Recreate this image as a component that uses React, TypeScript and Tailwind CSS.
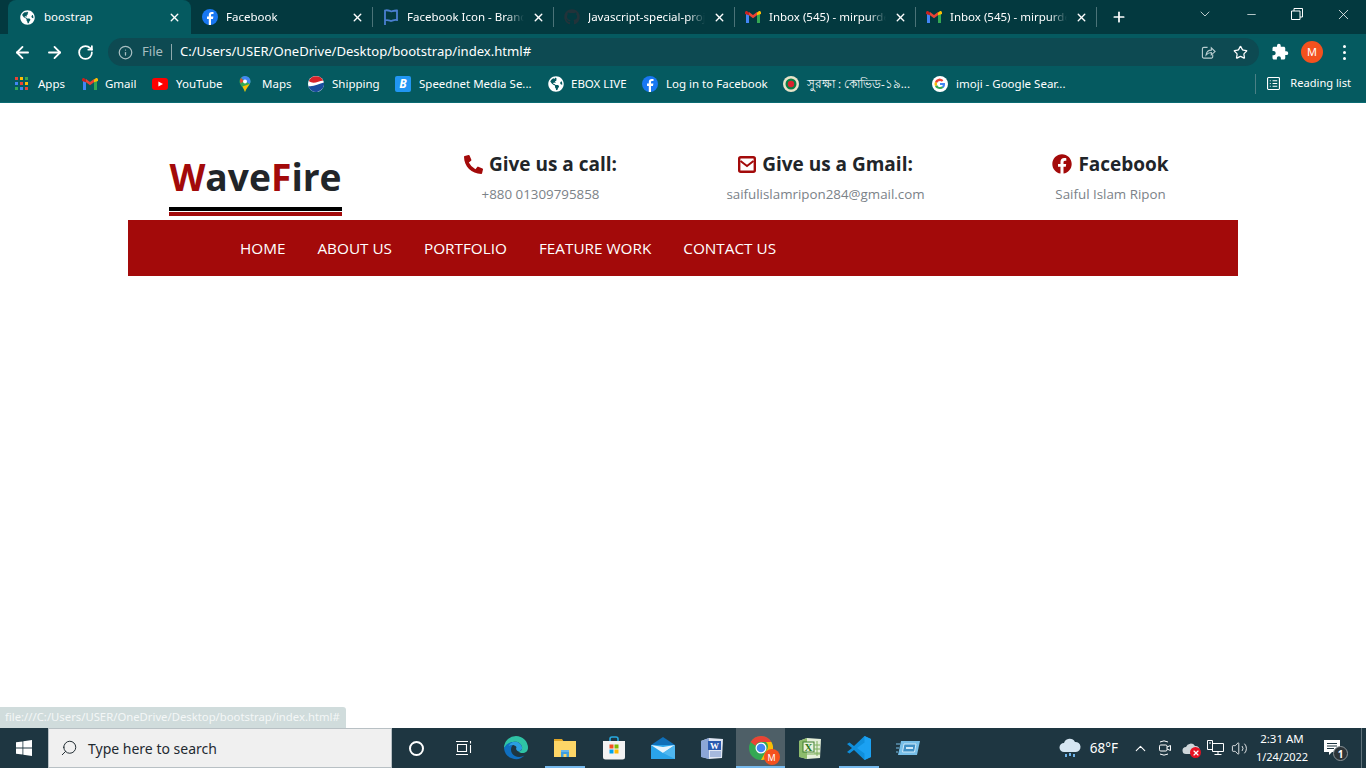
import { ArrowLeft, ArrowRight, RotateCw, Info, Star, Plus, X, Minus, ChevronDown, ChevronUp, Search, Volume2 } from "lucide-react";
import { FaPhoneAlt, FaFacebook, FaGithub, FaGlobeAmericas } from "react-icons/fa";
import { MdExtension } from "react-icons/md";

const uiFont = "font-['Noto_Sans',sans-serif]";

function FbIcon() {
  return (
    <svg viewBox="0 0 16 16" className="h-4 w-4 shrink-0">
      <circle cx="8" cy="8" r="8" fill="#1877f2" />
      <path d="M9 16V10h2l.4-2.4H9V6.3c0-.7.3-1.2 1.3-1.2h1.2V3c-.4 0-1-.1-1.7-.1-1.9 0-3 1.100-3 3v1.700H5V10h1.800v6z" fill="#fff" />
    </svg>
  );
}

function GmailIcon() {
  return (
    <svg viewBox="0 0 16 12" className="h-3 w-4 shrink-0">
      <path d="M1 12V2l3 2.300V12z" fill="#4285f4" />
      <path d="M12 12V4.300L15 2v10z" fill="#34a853" />
      <path d="M4 4.300V1l4 3 4-3v3.300L8 7.300z" fill="#ea4335" />
      <path d="M0 3V1.600C0 .3 1.500-.4 2.500.4L4 1.500v2.800z" fill="#c5221f" />
      <path d="M16 3V1.600C16 .3 14.500-.4 13.500.4L12 1.500v2.800z" fill="#fbbc04" />
    </svg>
  );
}

function GoogleIcon() {
  return (
    <svg viewBox="0 0 16 16" className="h-4 w-4 shrink-0">
      <circle cx="8" cy="8" r="8" fill="#fff" />
      <path d="M13 8.200c0-.4 0-.8-.1-1.100H8v2h2.800a2.500 2.500 0 0 1-1 1.600l1.600 1.300c1-.9 1.600-2.200 1.600-3.800z" fill="#4285f4" />
      <path d="M8 13c1.400 0 2.500-.4 3.400-1.200l-1.600-1.300c-.5.3-1 .5-1.800.5-1.300 0-2.500-.9-2.900-2.100L3 10.200C3.800 11.900 5.800 13 8 13z" fill="#34a853" />
      <path d="M5.100 8.900a3 3 0 0 1 0-1.800L3 5.800a5 5 0 0 0 0 4.400z" fill="#fbbc05" />
      <path d="M8 5c.8 0 1.400.3 1.900.8l1.500-1.500A5 5 0 0 0 3 5.800l2.100 1.300C5.500 5.900 6.700 5 8 5z" fill="#ea4335" />
    </svg>
  );
}

function AppsIcon() {
  const colors = ["#ea4335", "#fbbc05", "#34a853", "#4285f4", "#ea4335", "#fbbc05", "#34a853", "#4285f4", "#ea4335"];
  return (
    <div className="grid h-[13px] w-[13px] shrink-0 grid-cols-3 gap-[2px]">
      {colors.map((c, i) => (
        <span key={i} className="block" style={{ background: c }} />
      ))}
    </div>
  );
}

function YoutubeIcon() {
  return (
    <svg viewBox="0 0 16 12" className="h-3 w-4 shrink-0">
      <rect width="16" height="12" rx="3" fill="#f00" />
      <path d="M6.400 3.400v5.200L11 6z" fill="#fff" />
    </svg>
  );
}

function MapsIcon() {
  return (
    <svg viewBox="0 0 12 16" className="h-4 w-3 shrink-0">
      <path d="M6 0a5.500 5.500 0 0 1 5.500 5.500c0 3.500-4 6-5.500 10.500C4.500 11.500.5 9 .5 5.500A5.500 5.500 0 0 1 6 0z" fill="#34a853" />
      <path d="M6 0a5.500 5.500 0 0 1 5.500 5.500c0 1-.3 1.800-.8 2.600L2 2a5.400 5.400 0 0 1 4-2z" fill="#4285f4" />
      <path d="M2 2 .9 4.500l.8 3 3-2.500z" fill="#ea4335" />
      <path d="M3.500 10.500 10.700 8c-1.500 2.500-3.800 4.500-4.700 8-.5-2-1.500-3.800-2.500-5.500z" fill="#fbbc05" />
      <circle cx="6" cy="5.500" r="2" fill="#fff" />
    </svg>
  );
}

function PepsiIcon() {
  return (
    <svg viewBox="0 0 16 16" className="h-4 w-4 shrink-0">
      <circle cx="8" cy="8" r="8" fill="#fff" />
      <path d="M.8 5a8 8 0 0 1 14.400-.5C10 5.500 5 8.500.8 5z" fill="#d8232a" />
      <path d="M.3 10C5 11 11 8 15.900 6.500A8 8 0 0 1 .3 10z" fill="#1a4d9e" />
    </svg>
  );
}

function SpeednetIcon() {
  return (
    <span className="flex h-4 w-4 shrink-0 items-center justify-center rounded-[2px] bg-[#2196f3] text-[12px] font-bold italic leading-none text-white">
      B
    </span>
  );
}

function ShieldIcon() {
  return (
    <svg viewBox="0 0 16 16" className="h-4 w-4 shrink-0">
      <circle cx="8" cy="8" r="8" fill="#e8e3c8" />
      <circle cx="8" cy="8" r="5.500" fill="#0a7d45" />
      <circle cx="8" cy="8" r="3.200" fill="#d9232e" />
    </svg>
  );
}

function EnvelopeIcon() {
  return (
    <svg viewBox="0 0 18 17" className="h-[17px] w-[18px]" fill="none" stroke="#a30a0a">
      <rect x="1.200" y="1.200" width="15.600" height="14.600" rx="1.500" strokeWidth="2.400" />
      <path d="M2.500 5 9 10l6.500-5" strokeWidth="2" />
    </svg>
  );
}

const tabs = [
  { title: "Facebook", icon: <FbIcon /> },
  {
    title: "Facebook Icon - Brand",
    icon: (
      <svg viewBox="0 0 16 16" className="h-4 w-4 shrink-0" fill="none" stroke="#4a7fd0" strokeWidth="1.800">
        <path d="M2 16V1.500c3-1 5 .8 6 .8s3-1 6-.8v9.500c-3-.5-5 1-6 1s-3-1.500-6-.5" />
      </svg>
    ),
  },
  { title: "Javascript-special-proj", icon: <FaGithub className="h-4 w-4 shrink-0 text-[#22333a]" /> },
  { title: "Inbox (545) - mirpurde", icon: <GmailIcon /> },
  { title: "Inbox (545) - mirpurde", icon: <GmailIcon /> },
];

const bookmarks = [
  { label: "Apps", icon: <AppsIcon />, w: "w-[67px]", text: "pl-[10px]" },
  { label: "Gmail", icon: <GmailIcon />, w: "w-[70px]", text: "pl-[7px]" },
  { label: "YouTube", icon: <YoutubeIcon />, w: "w-[87px]", text: "pl-[8px]" },
  { label: "Maps", icon: <MapsIcon />, w: "w-[69px]", text: "pl-[11px]" },
  { label: "Shipping", icon: <PepsiIcon />, w: "w-[87px]", text: "pl-[8px]" },
  { label: "Speednet Media Se...", icon: <SpeednetIcon />, w: "w-[153px]", text: "pl-[8px]" },
  { label: "EBOX LIVE", icon: <FaGlobeAmericas className="h-4 w-4 shrink-0 text-white" />, w: "w-[94px]", text: "pl-[7px]" },
  { label: "Log in to Facebook", icon: <FbIcon />, w: "w-[141px]", text: "pl-[8px]" },
  { label: "সুরক্ষা : কোভিড-১৯...", icon: <ShieldIcon />, w: "w-[149px]", text: "pl-[8px]" },
  { label: "imoji - Google Sear...", icon: <GoogleIcon />, w: "w-[140px]", text: "pl-[8px]" },
];

const contacts = [
  { icon: <FaPhoneAlt className="h-[19px] w-[19px] text-[#a30a0a]" />, title: "Give us a call:", sub: "+880 01309795858" },
  { icon: <EnvelopeIcon />, title: "Give us a Gmail:", sub: "saifulislamripon284@gmail.com" },
  { icon: <FaFacebook className="h-[20px] w-[20px] text-[#a30a0a]" />, title: "Facebook", sub: "Saiful Islam Ripon" },
];

const navItems = ["Home", "About us", "Portfolio", "Feature work", "Contact us"];

function EdgeIcon() {
  return (
    <svg viewBox="0 0 24 24" className="h-6 w-6">
      <path d="M12 0a12 12 0 0 1 12 12c0 3-2.500 5-5.500 5-2 0-3.500-.6-4-1.500 3-.5 4-2.500 3.500-4.500C17 7 13 5 9 6c-4 1-7 4-9 6A12 12 0 0 1 12 0z" fill="#2fc3a5" />
      <path d="M0 12c2-3.500 5.500-6 9-6 4-.5 2 1-1 4-2 3-1 8 3 10 3 1.500 7 1 9.500-.5A12 12 0 0 1 0 12z" fill="#0f6fc0" />
      <path d="M9 6c4-1 8 1 9 5 .5 2-.5 4-3.500 4.500-2-1-3-2.500-2-4.500-2.500-3-6-2-8-1 1-1.800 2.500-3.300 4.500-4z" fill="#2a9fe0" />
    </svg>
  );
}

function FolderIcon() {
  return (
    <svg viewBox="0 0 24 20" className="h-5 w-6">
      <path d="M1 1h8l2 3H1z" fill="#e0a526" />
      <rect x="1" y="3" width="22" height="16" fill="#fdd667" />
      <path d="M8 19v-6h8v6h-2.500v-3h-3v3z" fill="#3f9fe0" />
      <rect x="8" y="12" width="8" height="2" fill="#68b6ea" />
    </svg>
  );
}

function StoreIcon() {
  return (
    <svg viewBox="0 0 24 24" className="h-6 w-6">
      <path d="M8 6V3a2 2 0 0 1 2-2h4a2 2 0 0 1 2 2v3" fill="none" stroke="#27a9e0" strokeWidth="1.600" />
      <path d="M1 5h22v16a2.500 2.500 0 0 1-2.500 2.500h-17A2.500 2.500 0 0 1 1 21z" fill="#f2f2f2" />
      <rect x="7.500" y="8.500" width="4" height="4" fill="#f25022" />
      <rect x="12.500" y="8.500" width="4" height="4" fill="#7fba00" />
      <rect x="7.500" y="13.500" width="4" height="4" fill="#00a4ef" />
      <rect x="12.500" y="13.500" width="4" height="4" fill="#ffb900" />
    </svg>
  );
}

function MailIcon() {
  return (
    <svg viewBox="0 0 24 22" className="h-[22px] w-6">
      <path d="M0 8 12 0l12 8z" fill="#0f6fb8" />
      <path d="M0 8h24v14H0z" fill="#2aa4ea" />
      <path d="M0 8l12 8 12-8-12 2z" fill="#e6f4fc" />
      <path d="M12 16 24 22V8z" fill="#4fb7f0" />
    </svg>
  );
}

function WordIcon() {
  return (
    <svg viewBox="0 0 24 24" className="h-6 w-6">
      <path d="M1 5 9 2l14 1-1 19-13 1-7-2z" fill="#dfe6f3" />
      <path d="M1 5l8-3v21l-8-2z" fill="#8ca6d6" />
      <rect x="8" y="5" width="13" height="9" fill="#2a5ab0" />
      <text x="14.500" y="13" fontSize="9" fontWeight="700" fill="#fff" textAnchor="middle" fontFamily="Liberation Serif, serif">W</text>
      <path d="M10 16h11M10 18h11M10 20h11" stroke="#6d8cc8" strokeWidth="1" />
    </svg>
  );
}

function ChromeIcon() {
  return (
    <div className="relative h-6 w-6">
      <svg viewBox="0 0 24 24" className="h-6 w-6">
        <circle cx="12" cy="12" r="12" fill="#34a853" />
        <path d="M12 0a12 12 0 0 1 10.400 6H12a6 6 0 0 0-5.600 3.800L1.600 6A12 12 0 0 1 12 0z" fill="#ea4335" />
        <path d="M22.400 6A12 12 0 0 1 12 24l5-9a6 6 0 0 0 0-9z" fill="#fbbc05" />
        <circle cx="12" cy="12" r="5.500" fill="#fff" />
        <circle cx="12" cy="12" r="4.300" fill="#4285f4" />
      </svg>
      <span className={`absolute -bottom-[5px] -right-[7px] flex h-[16px] w-[16px] items-center justify-center rounded-full bg-[#f4511e] text-[9px] leading-none text-white ${uiFont}`}>
        M
      </span>
    </div>
  );
}

function ExcelIcon() {
  return (
    <svg viewBox="0 0 24 24" className="h-6 w-6">
      <path d="M1 5 9 2l14 1-1 19-13 1-7-2z" fill="#e4efd9" />
      <path d="M1 5l8-3v21l-8-2z" fill="#8dbb6c" />
      <rect x="5" y="6" width="11" height="10" fill="#e9f3dd" stroke="#3f7f2e" strokeWidth="1" />
      <text x="10.500" y="15" fontSize="11" fontWeight="700" fill="#2f7a1e" textAnchor="middle" fontFamily="Liberation Serif, serif">X</text>
      <path d="M16 9h6M16 13h6M16 17h6M19 5v15M9 18h13" stroke="#7fb05e" strokeWidth="1" />
    </svg>
  );
}

function VscodeIcon() {
  return (
    <svg viewBox="0 0 24 24" className="h-6 w-6">
      <path d="M17.500 0 24 3v18l-6.500 3L7 14l-4.500 3.500L0 16l5-4-5-4 2.500-1.500L7 10z" fill="#0f8fdc" />
      <path d="M17.500 0 24 3v18l-6.500 3zM17.500 6.500 10 12l7.500 5.500z" fill="#1ba1f2" fillRule="evenodd" />
    </svg>
  );
}

function RemoteIcon() {
  return (
    <svg viewBox="0 0 24 16" className="h-4 w-6">
      <path d="M0 4h4M0 8h3M0 12h2" stroke="#78bfe8" strokeWidth="1" />
      <path d="M5 1h19l-3 14H2z" fill="#78bfe8" />
      <path d="M8 4h12l-1.500 8H6.500z" fill="#3f8fc4" stroke="#cfe9f8" strokeWidth="1" />
      <rect x="10" y="7" width="7" height="2" fill="#cfe9f8" />
    </svg>
  );
}

const pinned = [
  { icon: <EdgeIcon />, bar: "" },
  { icon: <FolderIcon />, bar: "w-10" },
  { icon: <StoreIcon />, bar: "" },
  { icon: <MailIcon />, bar: "" },
  { icon: <WordIcon />, bar: "" },
  { icon: <ChromeIcon />, bar: "w-full", active: true },
  { icon: <ExcelIcon />, bar: "" },
  { icon: <VscodeIcon />, bar: "w-10" },
  { icon: <RemoteIcon />, bar: "" },
];

function BrowserChrome() {
  return (
    <div className={`text-white ${uiFont}`}>
      {/* tab strip */}
      <div className="flex h-[34px] items-start bg-[#03393f] pl-2">
        <div className="flex h-[34px] w-[183px] items-center rounded-t-lg bg-[#055a60] pl-3 pr-[10px] text-[11.500px]">
          <FaGlobeAmericas className="h-[15px] w-[15px] shrink-0" />
          <span className="ml-[9px] flex-1">boostrap</span>
          <X size={13} strokeWidth={2.600} />
        </div>
        {tabs.map((t, i) => (
          <div key={i} className="relative flex h-[34px] w-[181px] items-center pl-[11px] pr-[8px] text-[11.500px]">
            {i > 0 && <span className="absolute left-0 top-[7px] h-5 w-px bg-[#4b7378]" />}
            {t.icon}
            <span className="ml-2 flex-1 overflow-hidden whitespace-nowrap [mask-image:linear-gradient(to_right,black_85%,transparent)]">{t.title}</span>
            <X size={13} strokeWidth={2.600} className="ml-2 shrink-0" />
          </div>
        ))}
        <div className="relative flex h-[34px] items-center pl-[15px]">
          <span className="absolute left-0 top-[7px] h-5 w-px bg-[#4b7378]" />
          <Plus size={16} strokeWidth={2.600} />
        </div>
        <div className="ml-auto flex h-full items-start">
          <div className="flex h-[28px] w-[46px] items-center justify-center">
            <ChevronDown size={16} strokeWidth={1.100} />
          </div>
          <div className="flex h-[28px] w-[46px] items-center justify-center">
            <Minus size={13} strokeWidth={1.300} />
          </div>
          <div className="flex h-[28px] w-[46px] items-center justify-center">
            <svg viewBox="0 0 12 12" className="h-3 w-3" fill="none" stroke="#fff" strokeWidth="1">
              <path d="M3 3V.5h8.500V9H9M.5 3h8.500v8.500H.5z" />
            </svg>
          </div>
          <div className="flex h-[28px] w-[46px] items-center justify-center">
            <X size={17} strokeWidth={1.100} />
          </div>
        </div>
      </div>
      {/* toolbar */}
      <div className="flex h-[36px] items-center bg-[#055a60] pl-[13px]">
        <ArrowLeft size={19} strokeWidth={2.300} />
        <ArrowRight size={19} strokeWidth={2.300} className="ml-[13px]" />
        <RotateCw size={17} strokeWidth={2.500} className="ml-[13px]" />
        <div className="ml-[14px] flex h-[28px] w-[1151px] items-center rounded-full bg-[#0d4a52] pl-[10px] pr-[10px] text-[13.100px]">
          <Info size={15} className="text-[#a8bec1]" />
          <span className="ml-[9px] text-[#a8bec1]">File</span>
          <span className="ml-[8px] h-[16px] w-px bg-[#8fa9ac]" />
          <span className="ml-[8px]">C:/Users/USER/OneDrive/Desktop/bootstrap/index.html#</span>
          <svg viewBox="0 0 16 16" className="ml-auto h-[15px] w-[15px]" fill="none" stroke="#b9cdd0" strokeWidth="1.200">
            <path d="M7 2.500H3a1.500 1.500 0 0 0-1.500 1.500v8.500A1.500 1.500 0 0 0 3 14h8a1.500 1.500 0 0 0 1.500-1.500V10" />
            <path d="M5.500 10.500C6 7 8 5.500 11 5.500V3l4 4-4 3.500V8C8.500 8 7 8.800 5.500 10.500z" />
          </svg>
          <Star size={15} className="ml-[17px] mr-[1px]" />
        </div>
        <MdExtension className="ml-[12px] h-[18px] w-[18px]" />
        <span className="ml-[12px] flex h-[22px] w-[22px] items-center justify-center rounded-full bg-[#f4511e] text-[11px]">M</span>
        <div className="ml-[20px] flex flex-col gap-[3px]">
          <span className="h-[3px] w-[3px] rounded-full bg-white" />
          <span className="h-[3px] w-[3px] rounded-full bg-white" />
          <span className="h-[3px] w-[3px] rounded-full bg-white" />
        </div>
      </div>
      {/* bookmarks */}
      <div className="flex h-[33px] items-center border-b border-[#0a6b72] bg-[#055a60] pb-[5px] pl-[15px] text-[11.500px]">
        {bookmarks.map((b, i) => (
          <div key={i} className={`flex ${b.w} items-center`}>
            {b.icon}
            <span className={`whitespace-nowrap ${b.text} font-['Noto_Sans','Noto_Sans_CJK_SC',sans-serif]`}>{b.label}</span>
          </div>
        ))}
        <div className="ml-auto flex h-[20px] items-center border-l border-[#4b8085] pl-[11px] pr-[15px]">
          <svg viewBox="0 0 14 14" className="h-[13px] w-[13px]" fill="none" stroke="#fff" strokeWidth="1.200">
            <rect x=".6" y=".6" width="12.800" height="12.800" rx="1" />
            <path d="M3 4h1M6 4h5M3 7h1M6 7h5M3 10h1M6 10h5" />
          </svg>
          <span className="ml-[10px] text-[11.100px]">Reading list</span>
        </div>
      </div>
    </div>
  );
}

function SiteHeader() {
  return (
    <div className="mx-auto w-[1140px] font-['Open_Sans',sans-serif]">
      <div className="grid h-[117px] grid-cols-4">
        <div className="flex flex-col items-center justify-end">
          <h1 className="text-[37.200px] font-bold leading-none text-[#212529]">
            <span className="text-[#a30a0a]">W</span>ave<span className="text-[#a30a0a]">F</span>ire
          </h1>
          <div className="mb-[4px] mt-[12px] h-[9px] w-[173px] border-y-[4px] border-b-[#a30a0a] border-t-black" />
        </div>
        {contacts.map((c) => (
          <div key={c.title} className="flex flex-col items-center pt-[48px]">
            <div className="flex items-center gap-[6px]">
              {c.icon}
              <h2 className="text-[19px] font-bold leading-[26px] text-[#212529]">{c.title}</h2>
            </div>
            <p className="mt-[5px] text-[13.350px] leading-[24px] text-[#7b8288]">{c.sub}</p>
          </div>
        ))}
      </div>
      <nav className="mx-[15px] flex h-[56px] items-center gap-8 bg-[#a30a0a] pl-[112px] text-[15.300px] uppercase text-white">
        {navItems.map((n) => (
          <a key={n} href="#">{n}</a>
        ))}
      </nav>
    </div>
  );
}

function Taskbar() {
  return (
    <div className={`flex h-10 items-stretch bg-[#1e3641] text-white ${uiFont}`}>
      <div className="flex w-12 items-center justify-center">
        <svg viewBox="0 0 16 16" className="h-4 w-4" fill="#fff">
          <path d="M0 2.300 6.500 1.400V7.600H0zM7.300 1.300 16 0v7.600H7.300zM0 8.400H6.500V14.600L0 13.700zM7.300 8.400H16V16L7.300 14.700z" />
        </svg>
      </div>
      <div className="flex w-[344px] items-center border border-[#b8c0c4] bg-[#f0f0f0] pl-[11px] text-[14px] text-[#1f2a30]">
        <Search size={18} strokeWidth={1.300} className="-scale-x-100" />
        <span className="ml-[10px]">Type here to search</span>
      </div>
      <div className="flex w-12 items-center justify-center">
        <span className="h-[15px] w-[15px] rounded-full border-2 border-white" />
      </div>
      <div className="flex w-12 items-center justify-center">
        <svg viewBox="0 0 16 16" className="h-4 w-4" fill="none" stroke="#fff" strokeWidth="1.100">
          <path d="M0 1.500h12M0 14.500h12M1.500 4.500h9v7h-9zM14.500 1v2.500M14.500 5v8" />
        </svg>
      </div>
      <div className="ml-[3px] flex">
        {pinned.map((p, i) => (
          <div key={i} className={`relative flex h-10 w-[49px] items-center justify-center ${p.active ? "bg-[#4e5f67]" : ""}`}>
            {p.icon}
            {p.bar && <span className={`absolute bottom-0 h-[2px] ${p.bar} bg-[#76b9ed]`} />}
          </div>
        ))}
      </div>
      <div className="ml-auto flex items-center text-[13.500px]">
        <svg viewBox="0 0 22 22" className="h-[22px] w-[22px]">
          <path d="M5 15a4.500 4.500 0 0 1 0-9 6 6 0 0 1 11-1 5 5 0 0 1 1 10z" fill="#d6e6f2" />
          <path d="M7 17v3M11 16v3M15 17v3" stroke="#6fb3e8" strokeWidth="2" />
        </svg>
        <span className="ml-[9px]">68°F</span>
        <ChevronUp size={17} strokeWidth={1.500} className="ml-[14px]" />
        <svg viewBox="0 0 16 18" className="ml-[8px] h-[18px] w-4" fill="none" stroke="#fff" strokeWidth="1">
          <path d="M3 3a8 8 0 0 1 8 0M3 15a8 8 0 0 0 8 0" />
          <rect x="2.500" y="6" width="7.500" height="6" rx="1.200" />
          <path d="M10 8l3.500-1.500v5L10 10" />
        </svg>
        <div className="relative ml-[9px] h-[14px] w-[18px]">
          <svg viewBox="0 0 18 12" className="mt-[1px] h-3 w-[18px]">
            <path d="M4 12a3.500 3.500 0 0 1 0-7 5 5 0 0 1 9-1 4 4 0 0 1 1 8z" fill="#cfd6da" />
          </svg>
          <span className="absolute -bottom-[3px] -right-[1px] flex h-[11px] w-[11px] items-center justify-center rounded-full bg-[#e81123]">
            <X size={8} strokeWidth={3.500} />
          </span>
        </div>
        <svg viewBox="0 0 17 16" className="ml-[7px] h-4 w-[17px]" fill="none" stroke="#fff" strokeWidth="1">
          <path d="M5.500 3.500h11v8h-11zM11 11.500v3M7.500 14.500h7M.5.500h5v9h-5zM2 3h2" />
        </svg>
        <Volume2 size={17} strokeWidth={1.200} className="ml-[7px]" />
        <div className="ml-[8px] flex w-[52px] flex-col items-center leading-[18px]">
          <span className="whitespace-nowrap text-[11.500px]">2:31 AM</span>
          <span className="whitespace-nowrap text-[11px]">1/24/2022</span>
        </div>
        <div className="relative ml-[16px] mr-[21px] h-[16px] w-[16px]">
          <svg viewBox="0 0 16 15" className="h-[15px] w-4">
            <path d="M0 0h16v12H8l-3 3v-3H0z" fill="#fff" />
            <path d="M3 3.500h10M3 6h10M3 8.500h7" stroke="#1e3641" strokeWidth="1" />
          </svg>
          <span className="absolute -bottom-[5px] -right-[8px] flex h-[15px] w-[15px] items-center justify-center rounded-full border border-[#8a9499] bg-[#2c3438] text-[10px] font-bold leading-none">
            1
          </span>
        </div>
        <span className="h-10 w-[5px] border-l border-[#60727b]" />
      </div>
    </div>
  );
}

export default function App() {
  return (
    <div className="relative flex h-[768px] w-[1366px] flex-col overflow-hidden bg-white">
      <BrowserChrome />
      <main className="flex-1">
        <SiteHeader />
      </main>
      <div className={`absolute bottom-10 left-0 flex h-[21px] w-[346px] items-center rounded-tr-[3px] bg-[#d0dcdc] pl-[5px] text-[11.300px] text-[#f4f7f7] ${uiFont}`}>
        file:///C:/Users/USER/OneDrive/Desktop/bootstrap/index.html#
      </div>
      <Taskbar />
    </div>
  );
}
